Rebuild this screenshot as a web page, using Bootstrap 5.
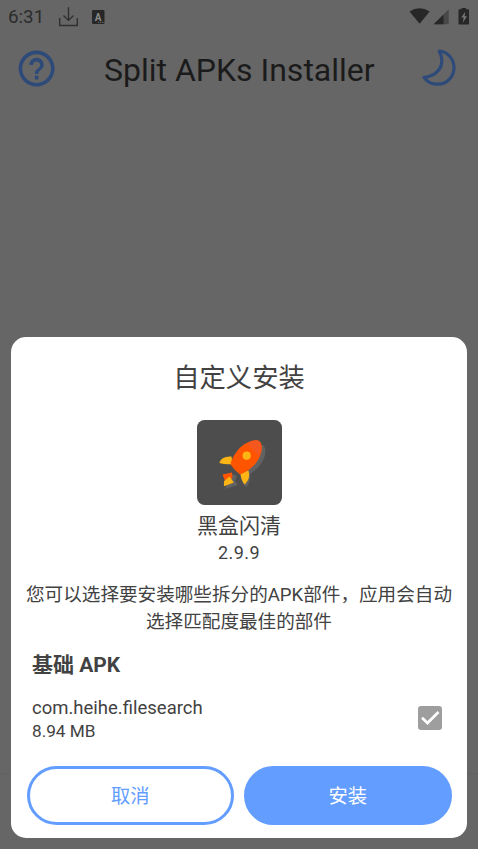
<!DOCTYPE html>
<html lang="zh-CN">
<head>
<meta charset="utf-8">
<meta name="viewport" content="width=device-width, initial-scale=1">
<title>Split APKs Installer</title>
<link href="https://cdn.jsdelivr.net/npm/bootstrap@5.3.0/dist/css/bootstrap.min.css" rel="stylesheet">
<style>
body{font-family:Roboto,"Noto Sans CJK SC",sans-serif;background:linear-gradient(#666 773px,#616161 773px,#616161 774px,#666 774px);color:#424242;height:849px;overflow:hidden}
svg{display:block;flex:none}
.status{height:33px;padding:0 9px 0 8px;color:#2c2c2c}
.clock{font-size:18.8px;line-height:33px;width:50px;padding-top:1px}
.topbar{height:72px;padding:0 22px 0 15.4px}
.app-title{font-size:32px;line-height:70px;padding-top:2px;color:#1b1b1b;white-space:nowrap;margin-left:-1px!important}
.moon{margin-top:-2px}
.scene{height:849px}
.sheet{margin:0 11px 11px;height:501px;border-radius:15px;padding:0 15.5px;background:#fff}
.sheet-title{font-size:26.3px;line-height:36px;margin-top:23px}
.app-icon{margin-top:24.4px}
.app-name{font-size:21px;line-height:30px;margin-top:5.6px}
.version{font-size:18px;line-height:24px;letter-spacing:.4px}
.desc{font-size:18.6px;line-height:27px;margin:17px -4px 0}
.group-title{font-size:21px;line-height:28px;margin:15px 5.5px 0}
.part{margin:17px 9.5px 0 5.5px}
.part-name{font-size:18.5px;line-height:24px}
.part-size{font-size:17.2px;line-height:23px}
.check{width:24px;height:24px;border-radius:3px;background:#9e9e9e;margin-top:-2px}
.actions{gap:10px;margin-top:23px}
.pill{height:59px;border-radius:30px;font-size:19.3px;border:3px solid #639dff;padding:3px 0 0}
.pill-line,.pill-line:hover{color:#639dff;background:#fff}
.pill-fill,.pill-fill:hover{color:#fff;background:#639dff}
</style>
</head>
<body>
<div class="scene d-flex flex-column">
  <header>
    <div class="status d-flex align-items-center">
      <span class="clock">6:31</span>
      <svg width="21" height="22" viewBox="0 0 21 22" fill="none" stroke="#303030" stroke-width="1.4"><path d="M1.700 12v7.500h17.600V12M10.500 1.200v13M5.500 9.600l5 4.800 5-4.800"/></svg>
      <svg style="margin-left:13px" width="13" height="14" viewBox="0 0 13 14"><rect width="12.500" height="14" rx="1.2" fill="#272727"/><text x="6" y="10.6" font-size="10" font-weight="700" text-anchor="middle" fill="#8b8b8b">A</text><path d="M6 12.300h1.200M8.200 12.300h1.200M10.300 12.300h1.200" stroke="#777"/></svg>
      <svg class="ms-auto" width="60" height="18" viewBox="0 0 60 18" fill="#272727"><path d="M.5 3.400Q10.500-2.800 20.700 3.400L10.600 15.700Z"/><path d="M24.700 16.300L39.700 1.300V16.300Z" fill="#484848"/><path d="M24.700 16.300L34.500 6.500V16.300Z"/><path d="M50.200 1.200h2.300V-.5h4.600V1.200h2.200q.7 0 .7.700v13.900q0 .7-.7.700h-9.100q-.7 0-.7-.7V1.900q0-.7.700-.7z"/><path d="M56.200 3.800L52.300 9.500h2.400l-.8 5.200L57.900 8.200h-2.300z" fill="#777"/></svg>
    </div>
    <div class="topbar d-flex align-items-center justify-content-between">
      <svg width="43.2" height="43.2" viewBox="0 0 24 24" fill="#2e4a79"><path d="M11 18h2v-2h-2v2zm1-16C6.480 2 2 6.480 2 12s4.480 10 10 10 10-4.480 10-10S17.520 2 12 2zm0 18c-4.410 0-8-3.590-8-8s3.590-8 8-8 8 3.590 8 8-3.590 8-8 8zm0-14c-2.210 0-4 1.790-4 4h2c0-1.100.9-2 2-2s2 .9 2 2c0 2-3 1.750-3 5h2c0-2.250 3-2.500 3-5 0-2.210-1.790-4-4-4z"/></svg>
      <h1 class="app-title fw-normal m-0">Split APKs Installer</h1>
      <svg class="moon" width="35" height="38" viewBox="0 0 35 38" fill="none" stroke="#2e4a79" stroke-width="3.2" stroke-linejoin="round"><path d="M18.200 2.200C27 2.700 33 10.400 33 18.500C33 28 25.600 35.200 17 35.200C10.900 35.200 5.700 32.300 3 28.300C14 27.500 21.500 20 20.800 10.500Q20.300 6 18.200 2.200Z"/></svg>
    </div>
  </header>
  <main class="sheet mt-auto d-flex flex-column">
    <h2 class="sheet-title fw-normal text-center mb-0">自定义安装</h2>
    <svg class="app-icon mx-auto" width="85" height="85" viewBox="0 0 85 85">
      <rect width="85" height="85" rx="7.500" fill="#4d4d4d"/>
      <g fill="#626262"><path d="M34 41Q45 24 60 23.500Q68 24 68.500 30Q68.500 44 53 54Q54 61 50 67Q44 65 45 57Z"/><path d="M36 54l4 2-2 5 3 4-13 4z"/></g>
      <path d="M34.500 36.500Q24 36 22.300 43Q29 45 35.500 44ZM51.500 50.500Q54 58 47.800 64.500Q43.500 60 43.500 53Z" fill="#fdb515"/>
      <path d="M33.500 44.500C35 35 46 20 60 20.200Q64.500 21 64.800 27C65 39 55 50 43 54.500Q37 50 33.500 44.500Z" fill="#ff5500"/>
      <path d="M50 23.500Q56 19.500 61 20.400Q64.500 22 64.600 28Q64.500 32 62 36.500Z" fill="#f4581f"/>
      <circle cx="49.700" cy="35.700" r="4.100" fill="#fdb515"/>
      <path d="M25.500 54.500L35 52.500L35.500 57L33 61.500L28 61Z" fill="#ff5500"/>
      <path d="M32.500 56.500L36.800 62.500L27.200 66.300Q26.500 65 27.200 61Z" fill="#fdb515"/>
    </svg>
    <div class="app-name text-center">黑盒闪清</div>
    <div class="version text-center">2.9.9</div>
    <p class="desc text-center mb-0">您可以选择要安装哪些拆分的APK部件，应用会自动<br>选择匹配度最佳的部件</p>
    <h3 class="group-title fw-bold mb-0">基础 APK</h3>
    <div class="part d-flex align-items-center justify-content-between">
      <div><div class="part-name">com.heihe.filesearch</div><div class="part-size">8.94 MB</div></div>
      <div class="check"><svg width="24" height="24" viewBox="0 0 24 24" fill="none" stroke="#fff" stroke-width="2.700"><path d="M4 11.800L9.500 17L20.500 6"/></svg></div>
    </div>
    <div class="actions d-flex">
      <button class="btn pill pill-line flex-fill w-50">取消</button>
      <button class="btn pill pill-fill flex-fill w-50">安装</button>
    </div>
  </main>
</div>
<script src="https://cdn.jsdelivr.net/npm/bootstrap@5.3.0/dist/js/bootstrap.bundle.min.js"></script>
</body>
</html>
